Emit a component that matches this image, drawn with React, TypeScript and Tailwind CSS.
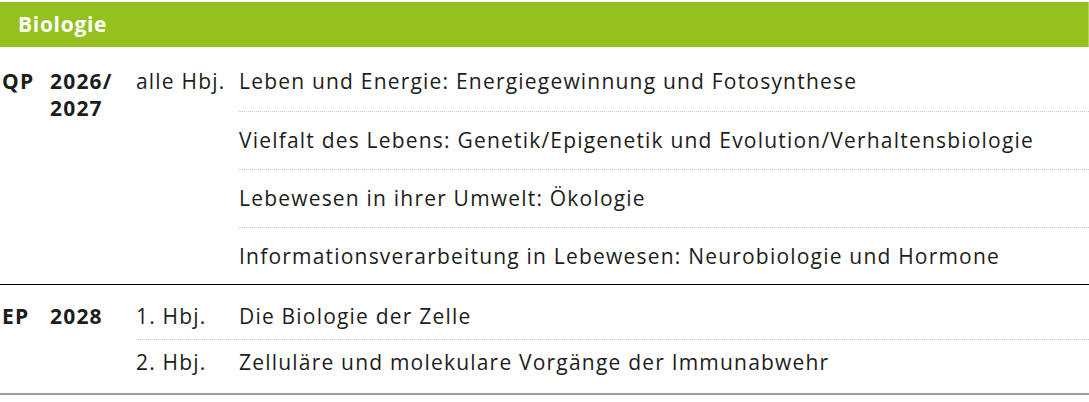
import React from "react";

const qpTopics = [
  { text: "Leben und Energie: Energiegewinnung und Fotosynthese", h: "h-[65px]", pt: "pt-[22px]" },
  { text: "Vielfalt des Lebens: Genetik/Epigenetik und Evolution/Verhaltensbiologie", h: "h-[58px]", pt: "pt-[16px]" },
  { text: "Lebewesen in ihrer Umwelt: Ökologie", h: "h-[58px]", pt: "pt-[16px]" },
  { text: "Informationsverarbeitung in Lebewesen: Neurobiologie und Hormone", h: "h-[56px]", pt: "pt-[16px]" },
];

const epTopics = [
  { hbj: "1. Hbj.", text: "Die Biologie der Zelle", h: "h-[55px]", pt: "pt-[19px]" },
  { hbj: "2. Hbj.", text: "Zelluläre und molekulare Vorgänge der Immunabwehr", h: "h-[53px]", pt: "pt-[10px]" },
];

export default function App() {
  return (
    <div
      className="w-[1089px] h-[402px] bg-white pt-[2px] text-[#1d1d1b] text-[21px] leading-[25px] tracking-[1.2px]"
      style={{ fontFamily: '"Open Sans", "Liberation Sans", sans-serif' }}
    >
      {/* Header */}
      <div className="h-[45px] bg-[#95c11f] border-r border-[#b5d65a] px-[18px] flex items-center">
        <span className="text-white font-bold text-[21px] tracking-[0.7px]">Biologie</span>
      </div>

      {/* QP group */}
      <div className="flex border-b border-black">
        <div className="w-[50px] pl-[2px] pt-[22px] font-bold">QP</div>
        <div className="w-[86px] pt-[21px] font-bold leading-[27px]">
          2026/
          <br />
          2027
        </div>
        <div className="w-[103px] pt-[22px]">alle Hbj.</div>
        <div className="flex-1 flex flex-col">
          {qpTopics.map((t, i) => (
            <div
              key={t.text}
              className={`${t.h} ${t.pt} whitespace-nowrap ${
                i < qpTopics.length - 1 ? "border-b border-dotted border-[#cccccc]" : ""
              }`}
            >
              {t.text}
            </div>
          ))}
        </div>
      </div>

      {/* EP group */}
      <div className="flex border-b-2 border-[#9d9d9d]">
        <div className="w-[50px] pl-[2px] pt-[19px] font-bold">EP</div>
        <div className="w-[86px] pt-[19px] font-bold">2028</div>
        <div className="flex-1 flex flex-col">
          {epTopics.map((t, i) => (
            <div
              key={t.hbj}
              className={`flex whitespace-nowrap ${t.h} ${t.pt} ${
                i < epTopics.length - 1 ? "border-b border-dotted border-[#cccccc]" : ""
              }`}
            >
              <div className="w-[103px]">{t.hbj}</div>
              <div className="flex-1">{t.text}</div>
            </div>
          ))}
        </div>
      </div>
    </div>
  );
}
